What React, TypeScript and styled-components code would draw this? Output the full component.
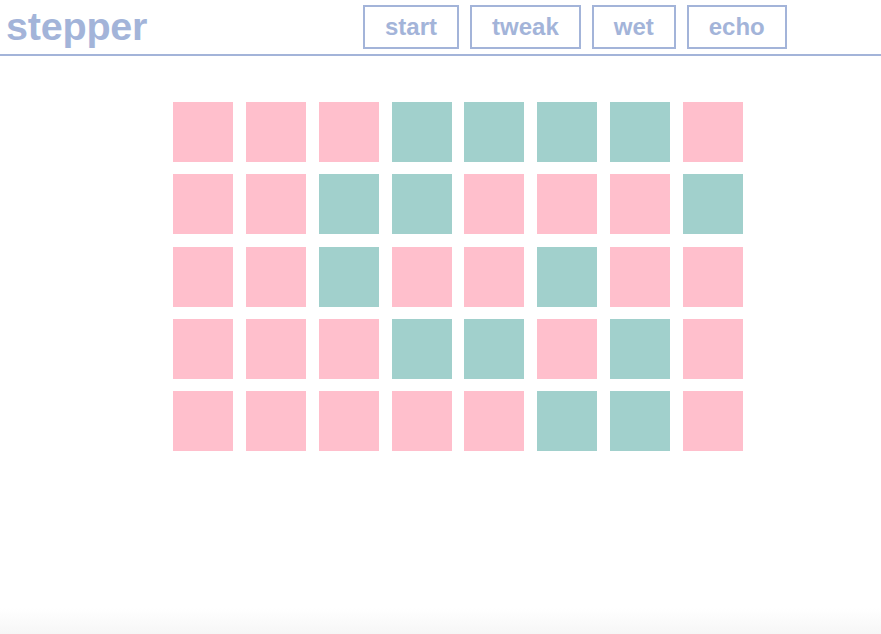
import React, { useState } from 'react'
import styled, { createGlobalStyle } from 'styled-components'

const blue = '#a3b4d9'
const pink = '#ffbfcc'
const teal = '#a1d0cc'

const pattern = [
  '00011110',
  '00110001',
  '00100100',
  '00011010',
  '00000110'
]

const GlobalStyle = createGlobalStyle`
  html, body {
    margin: 0;
    padding: 0;
  }
  body {
    font-family: 'Liberation Sans', Arial, sans-serif;
    background: #fff;
  }
`

const App = () => {
  const [grid, setGrid] = useState(pattern.map((row) => row.split('').map((c) => c === '1')))

  const toggle = (r: number, c: number) => {
    setGrid((g) => g.map((row, ri) => (ri === r ? row.map((v, ci) => (ci === c ? !v : v)) : row)))
  }

  return (
    <Page>
      <GlobalStyle />
      <Header>
        <Title>stepper</Title>
        <Nav>
          <NavButton>start</NavButton>
          <NavButton>tweak</NavButton>
          <NavButton>wet</NavButton>
          <NavButton>echo</NavButton>
        </Nav>
      </Header>
      <Grid>
        {grid.map((row, r) =>
          row.map((on, c) => <Cell key={`${r}-${c}`} $on={on} onClick={() => toggle(r, c)} />)
        )}
      </Grid>
    </Page>
  )
}

const Page = styled.div`
  min-height: 100vh;
  background: linear-gradient(to bottom, #fff 0, #fff calc(100% - 26px), #f6f6f6 100%);
`

const Header = styled.header`
  display: flex;
  align-items: center;
  height: 54px;
  border-bottom: 2px solid ${blue};
  padding: 0 6px;
`

const Title = styled.h1`
  margin: 0 0 1px 0;
  width: 357px;
  font-size: 39.5px;
  font-weight: bold;
  color: ${blue};
  letter-spacing: -0.2px;
  line-height: 1;
`

const Nav = styled.nav`
  display: flex;
  gap: 11px;
  margin-bottom: 1px;
`

const NavButton = styled.button`
  box-sizing: border-box;
  height: 44px;
  padding: 0 20px;
  border: 2px solid ${blue};
  background: #fff;
  color: ${blue};
  font-family: 'Liberation Sans', Arial, sans-serif;
  font-size: 24px;
  font-weight: bold;
  cursor: pointer;
`

const Grid = styled.div`
  display: grid;
  grid-template-columns: repeat(8, 60px);
  grid-auto-rows: 60px;
  column-gap: 12.85px;
  row-gap: 12.25px;
  margin: 46px 0 0 173px;
  width: max-content;
`

const Cell = styled.div<{ $on: boolean }>`
  background: ${({ $on }) => ($on ? teal : pink)};
  cursor: pointer;
`

export default App
